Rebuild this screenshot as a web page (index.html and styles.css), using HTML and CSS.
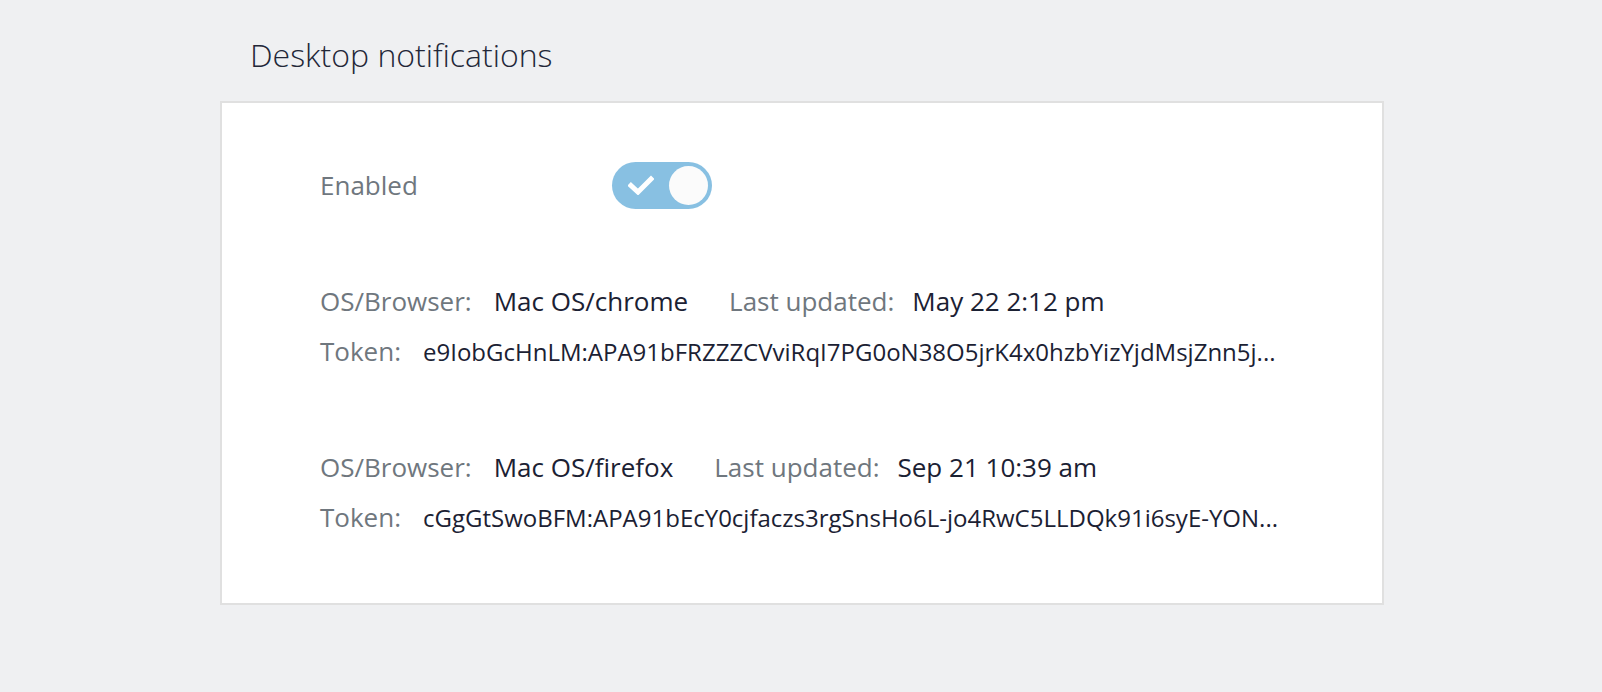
FILE: index.html
```html
<!DOCTYPE html>
<html lang="en">
<head>
<meta charset="utf-8">
<title>Desktop notifications</title>
<link rel="stylesheet" href="styles.css">
</head>
<body>
<main class="page">
  <h1 class="title">Desktop notifications</h1>
  <section class="card">
    <div class="enabled-row">
      <span class="label enabled-label">Enabled</span>
      <div class="toggle" role="switch" aria-checked="true">
        <svg class="toggle-check" viewBox="0 0 26 20" width="26" height="20" aria-hidden="true">
          <path d="M3 10.5 L10 17 L23 4" fill="none" stroke="#ffffff" stroke-width="5" stroke-linecap="square" stroke-linejoin="miter"/>
        </svg>
        <span class="toggle-knob"></span>
      </div>
    </div>

    <div class="device">
      <div class="line">
        <span class="label">OS/Browser:</span>
        <span class="value value-wide">Mac OS/chrome</span>
        <span class="label label-tight">Last updated:</span>
        <span class="value">May 22 2:12 pm</span>
      </div>
      <div class="line">
        <span class="label">Token:</span>
        <span class="value token">e9IobGcHnLM:APA91bFRZZZCVviRqI7PG0oN38O5jrK4x0hzbYizYjdMsjZnn5j...</span>
      </div>
    </div>

    <div class="device">
      <div class="line">
        <span class="label">OS/Browser:</span>
        <span class="value value-wide">Mac OS/firefox</span>
        <span class="label label-tight">Last updated:</span>
        <span class="value">Sep 21 10:39 am</span>
      </div>
      <div class="line">
        <span class="label">Token:</span>
        <span class="value token">cGgGtSwoBFM:APA91bEcY0cjfaczs3rgSnsHo6L-jo4RwC5LLDQk91i6syE-YON...</span>
      </div>
    </div>
  </section>
</main>
</body>
</html>
```

FILE: styles.css
```css
html, body {
  margin: 0;
  padding: 0;
}

body {
  background: #eff0f2;
  font-family: "Open Sans", "Noto Sans", "DejaVu Sans", sans-serif;
  color: #1b2133;
  min-height: 692px;
}

.page {
  width: 1164px;
  margin-left: 220px;
  padding-top: 33px;
}

.title {
  margin: 0 0 24px 0;
  padding-left: 30px;
  font-size: 32px;
  line-height: 44px;
  font-weight: 300;
  color: #222738;
}

.card {
  background: #ffffff;
  border: 2px solid #e0e0e0;
  padding: 57px 98px 61px 98px;
}

.enabled-row {
  display: flex;
  align-items: center;
  height: 50px;
}

.label {
  font-size: 26px;
  line-height: 50px;
  color: #6f777e;
  margin-right: 22px;
  white-space: nowrap;
}

.label-tight {
  margin-right: 18px;
}

.enabled-label {
  width: 292px;
  margin-right: 0;
}

.value {
  font-size: 26px;
  line-height: 50px;
  color: #1b2133;
  white-space: nowrap;
}

.value-wide {
  margin-right: 41px;
}

.token {
  font-size: 24px;
}

.toggle {
  width: 100px;
  height: 47px;
  border-radius: 24px;
  background: #88c0e2;
  display: flex;
  align-items: center;
  justify-content: space-between;
  padding: 0 4px 0 16px;
  box-sizing: border-box;
}

.toggle-check {
  display: block;
}

.toggle-knob {
  width: 39px;
  height: 39px;
  border-radius: 50%;
  background: #fbfbfb;
}

.device {
  margin-top: 66px;
}

.line {
  display: flex;
  align-items: baseline;
  height: 50px;
}
```
